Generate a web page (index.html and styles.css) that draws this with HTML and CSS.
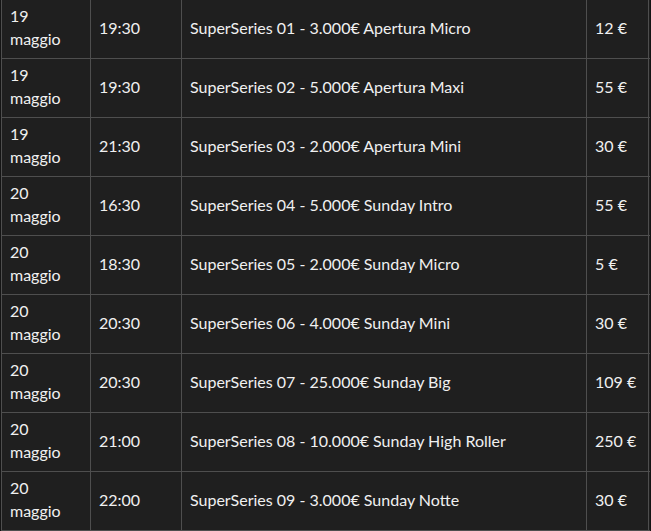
FILE: index.html
```html
<!DOCTYPE html>
<html lang="it">
<head>
<meta charset="utf-8">
<link rel="stylesheet" href="styles.css">
</head>
<body>
<div class="table">
  <div class="row"><div class="cell">19<br>maggio</div><div class="cell">19:30</div><div class="cell">SuperSeries 01 - 3.000€ Apertura Micro</div><div class="cell">12 €</div></div>
  <div class="row"><div class="cell">19<br>maggio</div><div class="cell">19:30</div><div class="cell">SuperSeries 02 - 5.000€ Apertura Maxi</div><div class="cell">55 €</div></div>
  <div class="row"><div class="cell">19<br>maggio</div><div class="cell">21:30</div><div class="cell">SuperSeries 03 - 2.000€ Apertura Mini</div><div class="cell">30 €</div></div>
  <div class="row"><div class="cell">20<br>maggio</div><div class="cell">16:30</div><div class="cell">SuperSeries 04 - 5.000€ Sunday Intro</div><div class="cell">55 €</div></div>
  <div class="row"><div class="cell">20<br>maggio</div><div class="cell">18:30</div><div class="cell">SuperSeries 05 - 2.000€ Sunday Micro</div><div class="cell">5 €</div></div>
  <div class="row"><div class="cell">20<br>maggio</div><div class="cell">20:30</div><div class="cell">SuperSeries 06 - 4.000€ Sunday Mini</div><div class="cell">30 €</div></div>
  <div class="row"><div class="cell">20<br>maggio</div><div class="cell">20:30</div><div class="cell">SuperSeries 07 - 25.000€ Sunday Big</div><div class="cell">109 €</div></div>
  <div class="row"><div class="cell">20<br>maggio</div><div class="cell">21:00</div><div class="cell">SuperSeries 08 - 10.000€ Sunday High Roller</div><div class="cell">250 €</div></div>
  <div class="row"><div class="cell">20<br>maggio</div><div class="cell">22:00</div><div class="cell">SuperSeries 09 - 3.000€ Sunday Notte</div><div class="cell">30 €</div></div>
</div>
</body>
</html>
```
FILE: styles.css
```css
html, body {
  margin: 0;
  padding: 0;
  background: #141414;
}
body {
  padding-left: 1px;
  font-family: Lato, "Liberation Sans", sans-serif;
  font-size: 16px;
  line-height: 23px;
  color: #f0f0f0;
}
.table {
  width: 648px;
  border-left: 1px solid #4e4e4e;
  background: #1f1f1f;
}
.row {
  display: grid;
  grid-template-columns: 89px 91px 405px 62px;
  border-bottom: 1px solid #4e4e4e;
}
.cell {
  box-sizing: border-box;
  padding: 4px 8px 8px;
  border-right: 1px solid #4e4e4e;
  display: flex;
  flex-direction: column;
  justify-content: center;
  min-height: 58px;
}
```
